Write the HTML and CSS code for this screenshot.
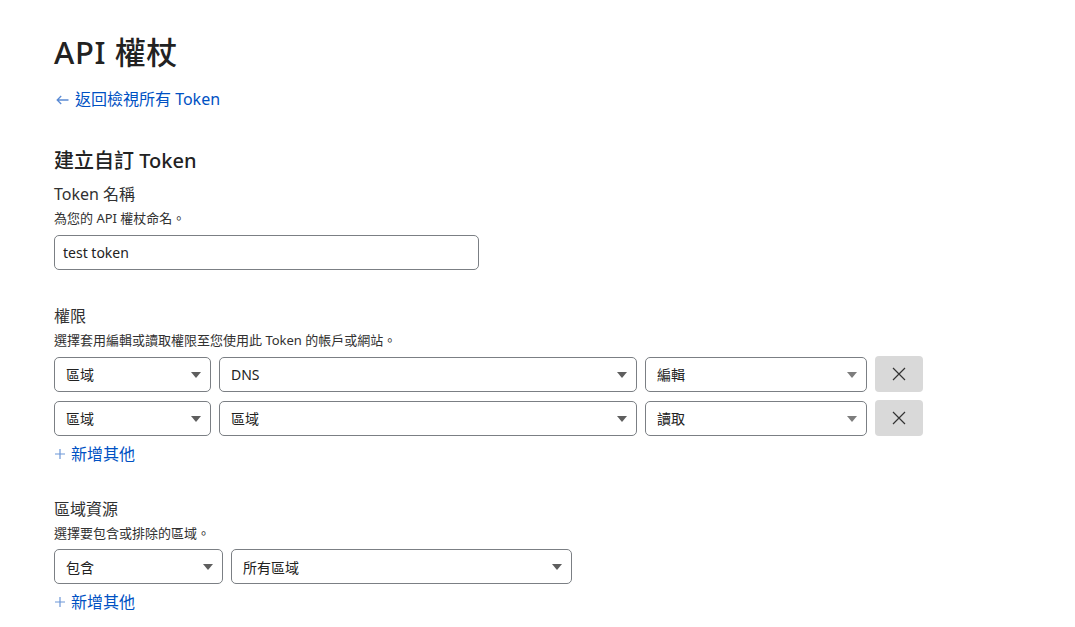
FILE: index.html
```html
<!DOCTYPE html>
<html lang="zh-Hant">
<head>
<meta charset="utf-8">
<title>API 權杖</title>
<link rel="stylesheet" href="styles.css">
</head>
<body>
<main class="page">
  <h1 class="title">API 權杖</h1>
  <a class="back-link" href="#">
    <svg class="back-arrow" width="13" height="10" viewBox="0 0 13 10"><path d="M12.5 5H1.2M5.2 1L1.2 5l4 4" fill="none" stroke="#5b8bd4" stroke-width="1.3"/></svg>
    <span>返回檢視所有 Token</span>
  </a>

  <h2 class="subtitle">建立自訂 Token</h2>

  <section class="group">
    <div class="label">Token 名稱</div>
    <div class="desc">為您的 API 權杖命名。</div>
    <div class="input">test token</div>
  </section>

  <section class="group group-perm">
    <div class="label">權限</div>
    <div class="desc">選擇套用編輯或讀取權限至您使用此 Token 的帳戶或網站。</div>
    <div class="rows">
      <div class="row">
        <div class="select w-157"><span>區域</span><i class="caret"></i></div>
        <div class="select w-418"><span>DNS</span><i class="caret"></i></div>
        <div class="select w-222"><span>編輯</span><i class="caret light"></i></div>
        <button class="remove" type="button" aria-label="remove">
          <svg width="14" height="14" viewBox="0 0 14 14"><path d="M1 1l12 12M13 1L1 13" stroke="#333" stroke-width="1.2" fill="none"/></svg>
        </button>
      </div>
      <div class="row">
        <div class="select w-157"><span>區域</span><i class="caret"></i></div>
        <div class="select w-418"><span>區域</span><i class="caret"></i></div>
        <div class="select w-222"><span>讀取</span><i class="caret light"></i></div>
        <button class="remove" type="button" aria-label="remove">
          <svg width="14" height="14" viewBox="0 0 14 14"><path d="M1 1l12 12M13 1L1 13" stroke="#333" stroke-width="1.2" fill="none"/></svg>
        </button>
      </div>
    </div>
    <a class="add-link" href="#">
      <svg class="plus" width="10" height="10" viewBox="0 0 10 10"><path d="M5 0v10M0 5h10" stroke="#6d97d8" stroke-width="1.2" fill="none"/></svg>
      <span>新增其他</span>
    </a>
  </section>

  <section class="group group-zone">
    <div class="label">區域資源</div>
    <div class="desc">選擇要包含或排除的區域。</div>
    <div class="rows">
      <div class="row">
        <div class="select w-169"><span>包含</span><i class="caret"></i></div>
        <div class="select w-341"><span>所有區域</span><i class="caret"></i></div>
      </div>
    </div>
    <a class="add-link" href="#">
      <svg class="plus" width="10" height="10" viewBox="0 0 10 10"><path d="M5 0v10M0 5h10" stroke="#6d97d8" stroke-width="1.2" fill="none"/></svg>
      <span>新增其他</span>
    </a>
  </section>
</main>
</body>
</html>
```

FILE: styles.css
```css
* { box-sizing: border-box; }

html, body {
  margin: 0;
  padding: 0;
  background: #ffffff;
}

body {
  font-family: "Noto Sans", "Noto Sans CJK TC", sans-serif;
  color: #313131;
}

.page {
  padding: 32px 0 0 54px;
  display: flex;
  flex-direction: column;
  align-items: flex-start;
}

.title {
  margin: 0;
  font-size: 31px;
  line-height: 40px;
  font-weight: 500;
  letter-spacing: 0.6px;
  color: #222222;
}

.back-link {
  margin-top: 15px;
  display: flex;
  align-items: center;
  gap: 6px;
  font-size: 16px;
  line-height: 24px;
  color: #0051c3;
  text-decoration: none;
}

.back-arrow { margin-left: 2px; margin-top: 2px; }

.subtitle {
  margin: 36px 0 0;
  font-size: 20px;
  line-height: 28px;
  font-weight: 500;
  color: #222222;
}

.group {
  display: flex;
  flex-direction: column;
  align-items: flex-start;
  margin-top: 7px;
}

.group-perm { margin-top: 34px; }
.group-zone { margin-top: 31px; }

.label {
  font-size: 16px;
  line-height: 24px;
}

.desc {
  margin-top: 2px;
  font-size: 13px;
  line-height: 20px;
}

.input {
  margin-top: 7px;
  width: 425px;
  height: 35px;
  border: 1px solid #7b7f84;
  border-radius: 5px;
  padding: 0 8px;
  display: flex;
  align-items: center;
  font-size: 14px;
  color: #222;
}

.rows {
  margin-top: 6px;
  display: flex;
  flex-direction: column;
  gap: 8px;
}

.row {
  display: flex;
  align-items: center;
  gap: 8px;
}

.select {
  height: 35px;
  border: 1px solid #7b7f84;
  border-radius: 5px;
  padding: 0 9px 0 11px;
  display: flex;
  align-items: center;
  justify-content: space-between;
  font-size: 14px;
  color: #222;
}

.w-157 { width: 157px; }
.w-418 { width: 418px; }
.w-222 { width: 222px; }
.w-169 { width: 169px; }
.w-341 { width: 341px; }

.caret {
  width: 0;
  height: 0;
  border-left: 5px solid transparent;
  border-right: 5px solid transparent;
  border-top: 6px solid #5e5e5e;
  margin-top: 1px;
}

.caret.light { border-top-color: #7d7d7d; }

.remove {
  width: 48px;
  height: 36px;
  border: none;
  border-radius: 4px;
  background: #d9d9d9;
  display: flex;
  align-items: center;
  justify-content: center;
  padding: 0;
}

.add-link {
  margin-top: 6px;
  display: flex;
  align-items: center;
  gap: 6px;
  font-size: 16px;
  line-height: 24px;
  color: #0051c3;
  text-decoration: none;
}

.plus { margin-left: 1px; }
```
